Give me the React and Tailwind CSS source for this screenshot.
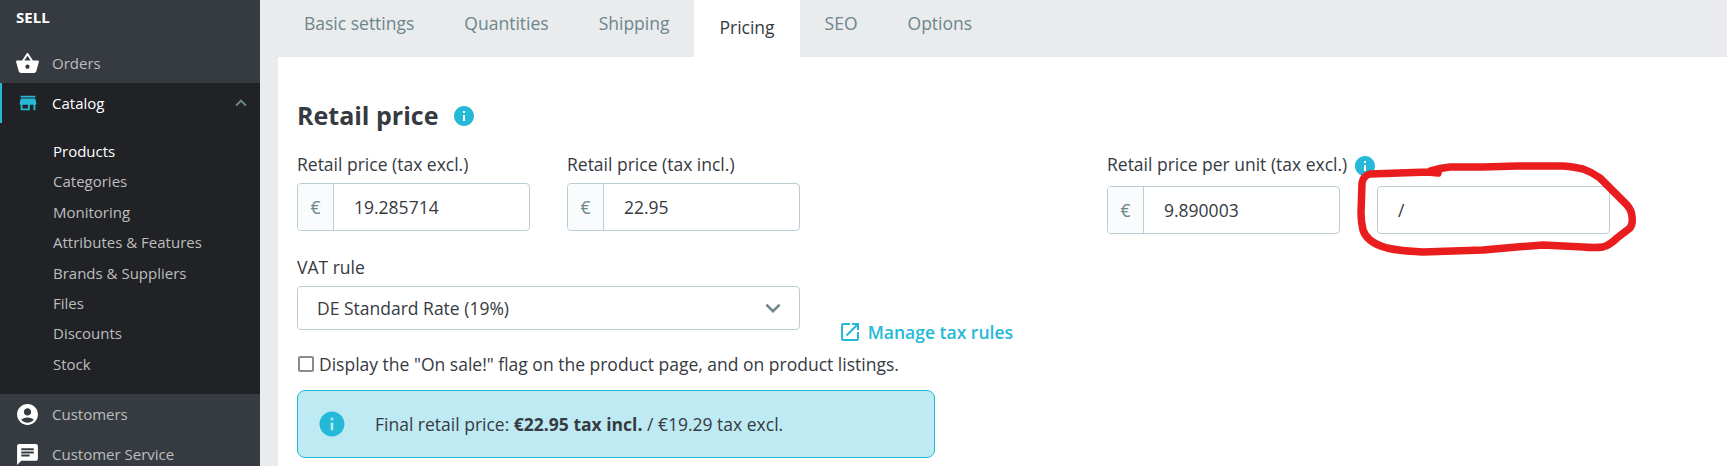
import {
  MdAccountCircle,
  MdChat,
  MdExpandMore,
  MdInfo,
  MdKeyboardArrowUp,
  MdOpenInNew,
  MdShoppingBasket,
  MdStore,
} from 'react-icons/md';

const subLinks = ['Categories', 'Monitoring', 'Attributes & Features', 'Brands & Suppliers', 'Files', 'Discounts', 'Stock'];
const tabs = ['Basic settings', 'Quantities', 'Shipping', 'Pricing', 'SEO', 'Options'];

function NavItem({ icon: Icon, label }) {
  return (
    <div className="flex h-10 items-center pl-[15px]">
      <Icon className="h-[25px] w-[25px] text-white" />
      <span className="ml-[12px] text-[15px] text-[#bebebe]">{label}</span>
    </div>
  );
}

function Sidebar() {
  return (
    <aside className="h-[466px] w-[260px] shrink-0 overflow-hidden bg-[#363a41]">
      <div className="h-[43px] pl-4 pt-[8px] text-[15px] leading-[19px] font-bold text-white">SELL</div>
      <NavItem icon={MdShoppingBasket} label="Orders" />
      <div className="h-[311px] bg-[#202226]">
        <div className="flex h-10 items-center border-l-2 border-[#25b9d7] pl-[15px]">
          <MdStore className="h-[22px] w-[22px] text-[#25b9d7]" />
          <span className="ml-[13px] text-[15px] text-white">Catalog</span>
          <MdKeyboardArrowUp className="ml-auto mr-[8px] h-[22px] w-[22px] text-[#6c868e]" />
        </div>
        <div className="pt-[13px] pl-[53px] text-[15px] leading-[30.4px] text-[#bebebe]">
          <div className="text-white">Products</div>
          {subLinks.map((link) => (
            <div key={link}>{link}</div>
          ))}
        </div>
      </div>
      <NavItem icon={MdAccountCircle} label="Customers" />
      <NavItem icon={MdChat} label="Customer Service" />
    </aside>
  );
}

function PriceInput({ value }) {
  return (
    <div className="flex h-12 w-[233px] shrink-0 overflow-hidden rounded border border-[#bbcdd2]">
      <span className="flex w-9 items-center justify-center border-r border-[#bbcdd2] bg-[#fafbfc] text-[#6c868e]">€</span>
      <span className="flex items-center pl-[20px]">{value}</span>
    </div>
  );
}

function Field({ label, value }) {
  return (
    <div className="w-[233px]">
      <div className="mb-[7px] leading-[24px]">{label}</div>
      <PriceInput value={value} />
    </div>
  );
}

export default function App() {
  return (
    <div className="relative flex h-[466px] overflow-hidden bg-[#eaebec] font-['Open_Sans',sans-serif] text-[17.5px] text-[#363a41]">
      <Sidebar />
      <main className="flex min-w-0 flex-1 flex-col">
        <nav className="flex h-[57px] pl-[19px] text-[#6c868e]">
          {tabs.map((tab) =>
            tab === 'Pricing' ? (
              <div key={tab} className="bg-white px-[25px] pt-[14px] text-[#363a41]">{tab}</div>
            ) : (
              <div key={tab} className="px-[25px] pt-[10px]">{tab}</div>
            )
          )}
        </nav>
        <section className="ml-[18px] flex-1 bg-white pt-[45px] pl-[19px]">
          <h2 className="flex h-[28px] items-center text-[25px] font-bold">
            Retail price
            <MdInfo className="ml-[14px] h-6 w-6 text-[#25b9d7]" />
          </h2>
          <div className="mt-[22px] flex">
            <div className="w-[503px]">
              <div className="flex gap-[37px]">
                <Field label="Retail price (tax excl.)" value="19.285714" />
                <Field label="Retail price (tax incl.)" value="22.95" />
              </div>
              <div className="mt-[24px] leading-[24px]">VAT rule</div>
              <div className="mt-[7px] flex h-[44px] items-center justify-between rounded border border-[#bbcdd2] pr-[11px] pl-[19px]">
                DE Standard Rate (19%)
                <MdExpandMore className="h-[30px] w-[30px] text-[#6c868e]" />
              </div>
            </div>
            <div className="ml-[307px] w-[510px]">
              <div className="mb-[10px] flex items-center leading-[24px]">
                Retail price per unit (tax excl.)
                <MdInfo className="ml-[6px] h-6 w-6 translate-y-[2px] text-[#25b9d7]" />
              </div>
              <div className="flex gap-[37px]">
                <PriceInput value="9.890003" />
                <div className="flex h-12 w-[233px] shrink-0 items-center rounded border border-[#bbcdd2] pl-[20px]">/</div>
              </div>
            </div>
          </div>
          <div className="flex h-0 w-[716px] justify-end">
            <a className="flex translate-y-[2px] items-center font-semibold text-[#25b9d7] whitespace-nowrap">
              <MdOpenInNew className="mr-[6px] h-6 w-6" />
              Manage tax rules
            </a>
          </div>
          <label className="mt-[21px] flex items-center leading-[26px]">
            <span className="mr-[5px] ml-px h-4 w-4 rounded-[2px] border-2 border-[#8a8a93]" />
            Display the "On sale!" flag on the product page, and on product listings.
          </label>
          <div className="mt-[13px] flex h-[68px] w-[638px] items-center rounded-lg border border-[#25b9d7] bg-[#beeaf3] pl-[19px]">
            <MdInfo className="h-[30px] w-[30px] text-[#25b9d7]" />
            <span className="ml-[28px]">
              Final retail price: <b>€22.95 tax incl.</b> / €19.29 tax excl.
            </span>
          </div>
        </section>
      </main>
      <svg className="pointer-events-none absolute top-0 left-0" width="1727" height="466" fill="none">
        <path
          d="M1438 173 L1430 171 Q1440 168 1450 167 L1483 167 L1517 166 L1563 166 Q1575 167 1583 169 Q1592 172 1600 178 L1627 205 Q1632 211 1632 217 Q1633 224 1630 228 L1617 238 Q1610 245 1603 247 Q1595 248 1583 247 L1543 245 L1517 247 L1483 250 L1423 252 Q1400 251 1387 248 Q1376 245 1370 240 Q1365 236 1363 230 Q1361 222 1361 213 L1362 183 Q1363 176 1370 174 L1428 172 L1438 173"
          stroke="#e91d1d"
          strokeWidth="7.5"
          strokeLinecap="round"
          strokeLinejoin="round"
        />
      </svg>
    </div>
  );
}
